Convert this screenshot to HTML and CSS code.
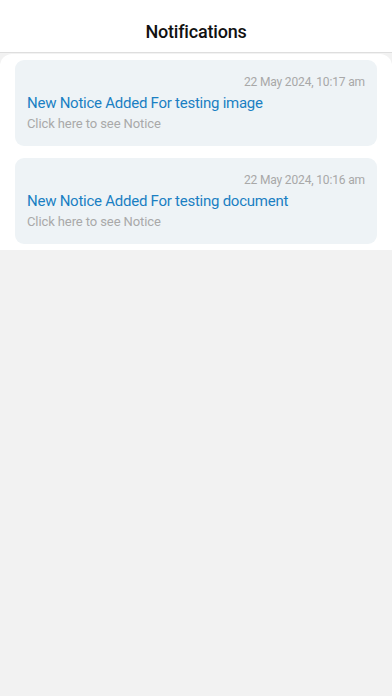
FILE: index.html
```html
<!DOCTYPE html>
<html>
<head>
<meta charset="utf-8">
<link rel="stylesheet" href="styles.css">
</head>
<body>
<header class="header">
  <h1 class="header-title">Notifications</h1>
</header>
<main class="list">
  <div class="card">
    <div class="date">22 May 2024, 10:17 am</div>
    <div class="title">New Notice Added For testing image</div>
    <div class="sub">Click here to see Notice</div>
  </div>
  <div class="card">
    <div class="date">22 May 2024, 10:16 am</div>
    <div class="title">New Notice Added For testing document</div>
    <div class="sub">Click here to see Notice</div>
  </div>
</main>
</body>
</html>
```
FILE: styles.css
```css
html, body {
  margin: 0;
  padding: 0;
}
body {
  background: #f2f2f2;
  font-family: Roboto, "Noto Sans", "Liberation Sans", sans-serif;
  width: 392px;
  height: 696px;
}
.header {
  background: #ffffff;
  height: 53px;
  border-bottom: 1px solid #dedede;
  display: flex;
  align-items: center;
  justify-content: center;
  box-sizing: border-box;
  padding-top: 10px;
}
.header-title {
  margin: 0;
  font-size: 18px;
  font-weight: 500;
  color: #111111;
  letter-spacing: -0.2px;
}
.list {
  background: #ffffff;
  border-radius: 12px 12px 0 0;
  padding: 6px 15px 6px;
  display: flex;
  flex-direction: column;
  gap: 12px;
  margin-top: 1px;
}
.card {
  background: #eef3f6;
  border-radius: 9px;
  padding: 14px 12px 13px;
  display: flex;
  flex-direction: column;
}
.date {
  align-self: flex-end;
  font-size: 12px;
  line-height: 16px;
  color: #a8a8a8;
  margin-bottom: 3px;
  letter-spacing: -0.15px;
}
.title {
  font-size: 15px;
  line-height: 20px;
  color: #1a7fc3;
  margin-bottom: 2px;
  letter-spacing: -0.25px;
}
.sub {
  font-size: 13px;
  line-height: 18px;
  color: #a9a9a9;
  letter-spacing: -0.1px;
}
```
